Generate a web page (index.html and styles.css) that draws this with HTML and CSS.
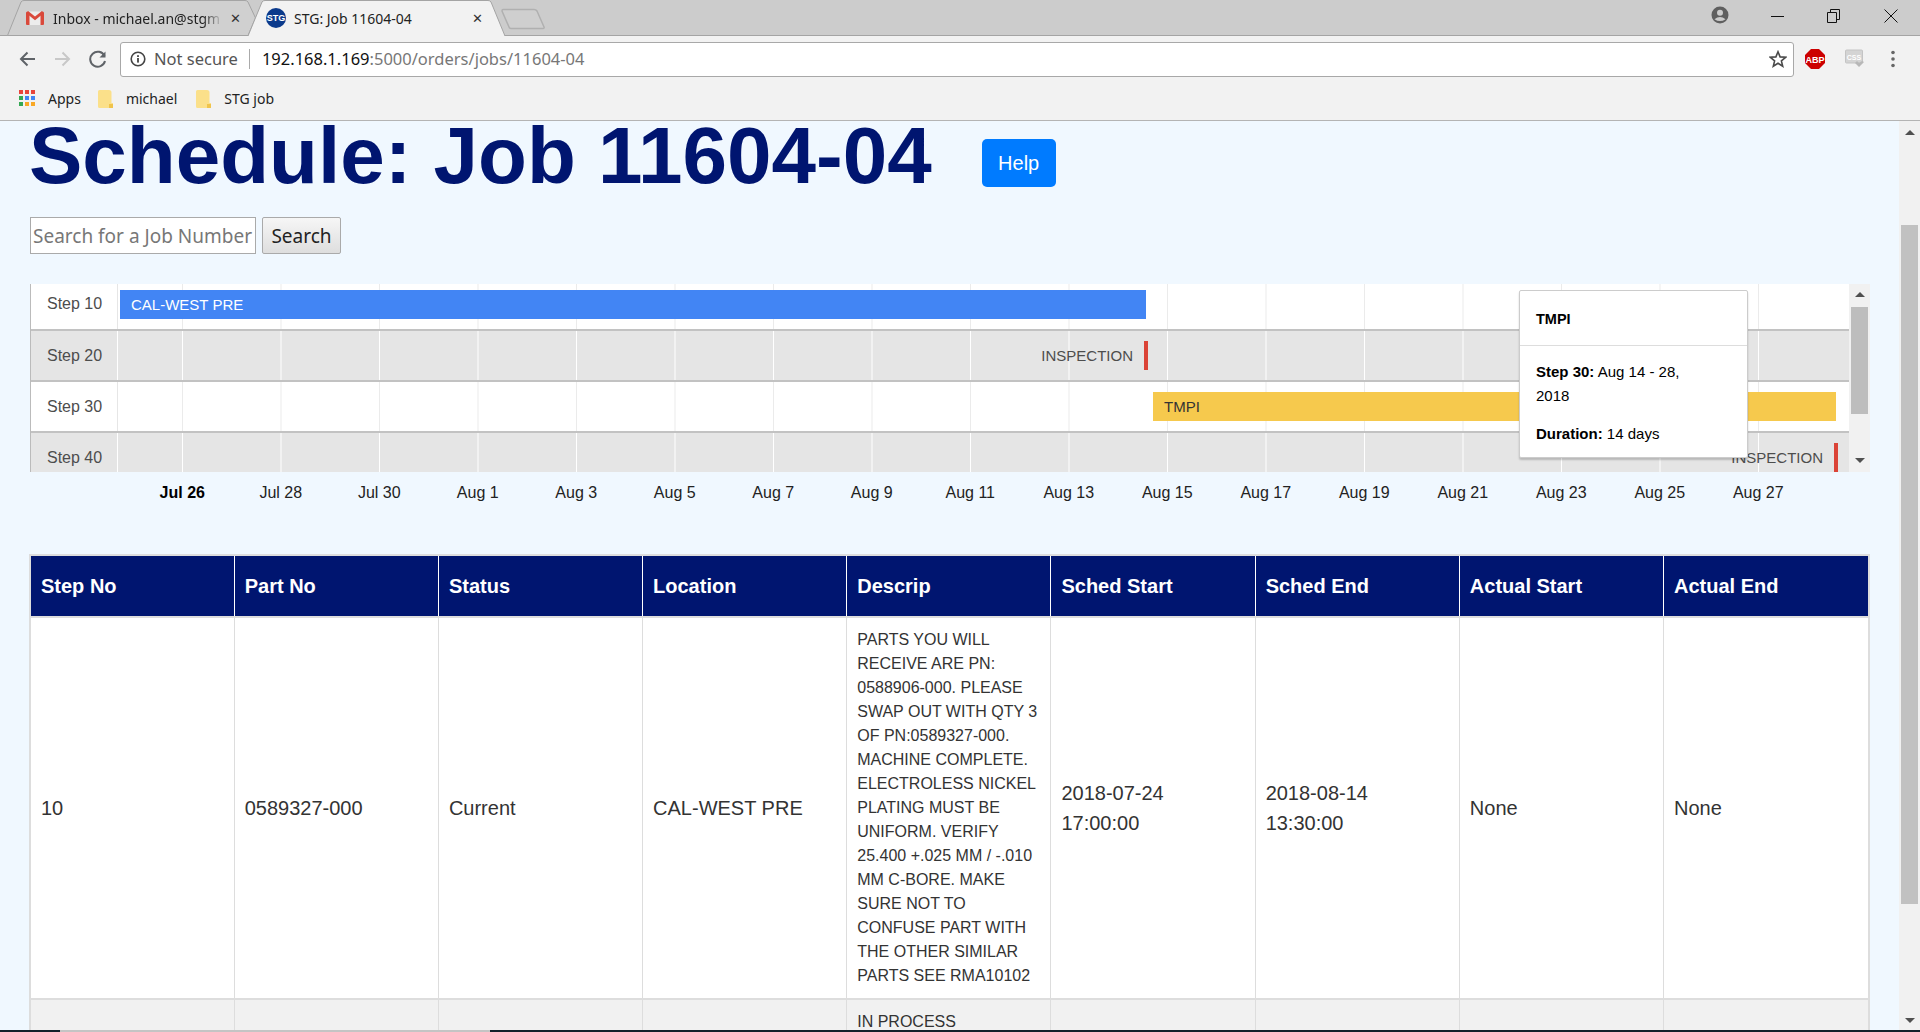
FILE: index.html
```html
<!DOCTYPE html>
<html lang="en">
<head>
    <meta charset="UTF-8">
    <title>STG: Job 11604-04</title>
    <link rel="stylesheet" href="styles.css">
</head>
<body>

    <!-- browser window top -->
    <header class="browser">
        <div class="tabstrip">
            <div class="tab tab-back">
                <svg class="tab-shape" viewBox="0 0 249 36" preserveAspectRatio="none"><path d="M0.5 35.5 L14 2 Q15 0.5 17 0.5 L238 0.5 Q240 0.5 241 2 L248.5 18 L241 35.5 Z"/></svg>
                <svg class="favicon" width="18" height="14" viewBox="0 0 18 14"><rect x="2" y="0.5" width="14" height="13.5" fill="#ececec"/><path d="M0 2 Q0 0.5 1.5 0.5 L3.5 2 V14 H1 Q0 14 0 13 Z M18 2 Q18 0.5 16.5 0.5 L14.5 2 V14 H17 Q18 14 18 13 Z" fill="#d9493b"/><path d="M1.2 1.2 L9 7.4 L16.8 1.2" fill="none" stroke="#d9493b" stroke-width="2.8"/></svg>
                <span class="tab-title tab-title-fade">Inbox - michael.an@stgm</span>
                <span class="tab-close">✕</span>
            </div>
            <div class="tab tab-active">
                <svg class="tab-shape" viewBox="0 0 257 36" preserveAspectRatio="none"><path d="M0 36 L14 2 Q15 0.5 17 0.5 L240 0.5 Q242 0.5 243 2 L257 36" /></svg>
                <svg class="favicon" width="20" height="20" viewBox="0 0 20 20"><circle cx="10" cy="10" r="10" fill="#0b3a8c"/><text x="10" y="13" text-anchor="middle" class="favicon-text">STG</text></svg>
                <span class="tab-title">STG: Job 11604-04</span>
                <span class="tab-close">✕</span>
            </div>
            <svg class="new-tab" width="44" height="22" viewBox="0 0 44 22"><path d="M2 1.5 L33 1.5 Q35 1.5 36 3 L43 19 Q43.5 20.5 42 20.5 L10 20.5 Q8.5 20.5 8 19 L1 3 Q1 1.5 2 1.5 Z" fill="#cfcfcf" stroke="#b0b0b0" stroke-width="1.5"/></svg>

            <div class="window-controls">
                <svg class="profile" width="18" height="18" viewBox="0 0 18 18"><circle cx="9" cy="9" r="8.5" fill="#5f5f5f"/><circle cx="9" cy="6.8" r="3" fill="#ccc"/><path d="M3.5 13.2 Q9 8.6 14.5 13.2 Q9 17 3.5 13.2 Z" fill="#ccc"/></svg>
                <svg class="win-btn win-min" width="14" height="14" viewBox="0 0 14 14"><path d="M0 7.5 H13" stroke="#111" fill="none"/></svg>
                <svg class="win-btn win-max" width="14" height="14" viewBox="0 0 14 14"><path d="M0.5 3.5 H9.5 V13.5 H0.5 Z M3.5 3.5 V0.5 H12.5 V10.5 H9.5" stroke="#111" fill="none"/></svg>
                <svg class="win-btn win-close" width="14" height="14" viewBox="0 0 14 14"><path d="M0.5 0.5 L13.5 13.5 M13.5 0.5 L0.5 13.5" stroke="#111" fill="none"/></svg>
            </div>
        </div>

        <div class="toolbar">
            <svg class="nav-btn" width="35" height="18" viewBox="0 0 35 18"><path d="M25 9 H11 M17.5 2.5 L11 9 L17.5 15.5" stroke="#5f6368" stroke-width="2" fill="none"/></svg>
            <svg class="nav-btn" width="35" height="18" viewBox="0 0 35 18"><path d="M10 9 H24 M17.5 2.5 L24 9 L17.5 15.5" stroke="#c8c8c8" stroke-width="2" fill="none"/></svg>
            <svg class="nav-btn" width="35" height="18" viewBox="0 0 35 18"><path d="M24.5 6 A7.5 7.5 0 1 0 25 11" stroke="#5f6368" stroke-width="2" fill="none"/><path d="M25.5 1.5 V7.5 H19.5 Z" fill="#5f6368"/></svg>

            <div class="omnibox">
                <svg class="info-icon" width="16" height="16" viewBox="0 0 16 16"><circle cx="8" cy="8" r="6.8" stroke="#444" stroke-width="1.6" fill="none"/><rect x="7.1" y="7" width="1.8" height="4.6" fill="#444"/><rect x="7.1" y="4.2" width="1.8" height="1.8" fill="#444"/></svg>
                <span class="not-secure">Not secure</span>
                <span class="omni-sep"></span>
                <span class="url">192.168.1.169<span class="url-path">:5000/orders/jobs/11604-04</span></span>
                <svg class="star" width="18" height="18" viewBox="0 0 18 18"><path d="M9 1.8 L11.1 6.9 L16.6 7.3 L12.4 10.9 L13.7 16.2 L9 13.3 L4.3 16.2 L5.6 10.9 L1.4 7.3 L6.9 6.9 Z" stroke="#4a4a4a" stroke-width="1.6" fill="none"/></svg>
            </div>

            <div class="extensions">
                <svg width="20" height="20" viewBox="0 0 20 20"><path d="M6 0 H14 L20 6 V14 L14 20 H6 L0 14 V6 Z" fill="#cc0000"/><text x="10" y="13.5" text-anchor="middle" class="abp-text">ABP</text></svg>
                <svg width="20" height="20" viewBox="0 0 20 20"><rect x="0.5" y="1" width="17" height="13" rx="1" fill="#d4d4d4" stroke="#c4c4c4"/><text x="9" y="10.5" text-anchor="middle" class="css-text">CSS</text><path d="M10 14 L14 18 L19 13 L17 12 L14 14 L12 12 Z" fill="#b8b8b8"/></svg>
                <svg class="menu-dots" width="6" height="18" viewBox="0 0 6 18"><circle cx="3" cy="2.5" r="1.8" fill="#666"/><circle cx="3" cy="9" r="1.8" fill="#666"/><circle cx="3" cy="15.5" r="1.8" fill="#666"/></svg>
            </div>
        </div>

        <div class="bookmarks">
            <svg class="apps-icon" width="17" height="17" viewBox="0 0 17 17">
                <rect x="0" y="0" width="4" height="4" fill="#e8453c"/><rect x="6" y="0" width="4" height="4" fill="#e8453c"/><rect x="12" y="0" width="4" height="4" fill="#e8453c"/>
                <rect x="0" y="6" width="4" height="4" fill="#34a853"/><rect x="6" y="6" width="4" height="4" fill="#4285f4"/><rect x="12" y="6" width="4" height="4" fill="#4285f4"/>
                <rect x="0" y="12" width="4" height="4" fill="#34a853"/><rect x="6" y="12" width="4" height="4" fill="#f9a825"/><rect x="12" y="12" width="4" height="4" fill="#f9a825"/>
            </svg>
            <span class="bm-label bm-apps">Apps</span>
            <svg class="folder" width="15" height="18" viewBox="0 0 15 18"><path d="M1.5 0 H11 Q13.5 0 13.5 2.5 V13 H15 V18 H1.5 Q0 18 0 16.5 V1.5 Q0 0 1.5 0 Z" fill="#fbe08a"/><path d="M11 14 H15 V18 H11 Z" fill="#f0c44c"/></svg>
            <span class="bm-label bm-michael">michael</span>
            <svg class="folder" width="15" height="18" viewBox="0 0 15 18"><path d="M1.5 0 H11 Q13.5 0 13.5 2.5 V13 H15 V18 H1.5 Q0 18 0 16.5 V1.5 Q0 0 1.5 0 Z" fill="#fbe08a"/><path d="M11 14 H15 V18 H11 Z" fill="#f0c44c"/></svg>
            <span class="bm-label">STG job</span>
        </div>
    </header>

    <div class="viewport">
        <main class="page">
            <div class="title-row">
                <h1>Schedule: Job 11604-04</h1>
                <button type="button" class="help-btn">Help</button>
            </div>

            <form class="search-form">
                <input type="text" placeholder="Search for a Job Number">
                <button type="button">Search</button>
            </form>

            <div class="timeline">
                <div class="timeline-rows">
                    <div class="t-row t-row-first">
                        <div class="t-label">Step 10</div>
                        <div class="t-track">
                            <div class="bar bar-blue" style="left: 2px; width: 1026px;">CAL-WEST PRE</div>
                        </div>
                    </div>
                    <div class="t-row t-row-grey">
                        <div class="t-label">Step 20</div>
                        <div class="t-track">
                            <div class="bar bar-red" style="left: 1026px; width: 4px;"><span class="bar-outside">INSPECTION</span></div>
                        </div>
                    </div>
                    <div class="t-row">
                        <div class="t-label">Step 30</div>
                        <div class="t-track">
                            <div class="bar bar-yellow" style="left: 1035px; width: 683px;">TMPI</div>
                        </div>
                    </div>
                    <div class="t-row t-row-grey">
                        <div class="t-label">Step 40</div>
                        <div class="t-track">
                            <div class="bar bar-red" style="left: 1716px; width: 4px;"><span class="bar-outside">INSPECTION</span></div>
                        </div>
                    </div>
                </div>

                <div class="mini-scroll">
                    <span class="arrow-up"></span>
                    <div class="mini-thumb"></div>
                    <span class="arrow-down"></span>
                </div>

                <div class="chart-tip">
                    <div class="tip-head">TMPI</div>
                    <div class="tip-body">
                        <p><b>Step 30:</b> Aug 14 - 28,<br>2018</p>
                        <p class="tip-last"><b>Duration:</b> 14 days</p>
                    </div>
                </div>
            </div>

            <div class="axis">
                <span class="axis-now">Jul 26</span>
                <span>Jul 28</span>
                <span>Jul 30</span>
                <span>Aug 1</span>
                <span>Aug 3</span>
                <span>Aug 5</span>
                <span>Aug 7</span>
                <span>Aug 9</span>
                <span>Aug 11</span>
                <span>Aug 13</span>
                <span>Aug 15</span>
                <span>Aug 17</span>
                <span>Aug 19</span>
                <span>Aug 21</span>
                <span>Aug 23</span>
                <span>Aug 25</span>
                <span>Aug 27</span>
            </div>

            <div class="table-wrap">
                <table class="steps">
                    <thead>
                        <tr>
                            <th>Step No</th>
                            <th>Part No</th>
                            <th>Status</th>
                            <th>Location</th>
                            <th>Descrip</th>
                            <th>Sched Start</th>
                            <th>Sched End</th>
                            <th>Actual Start</th>
                            <th>Actual End</th>
                        </tr>
                    </thead>
                    <tbody>
                        <tr>
                            <td>10</td>
                            <td>0589327-000</td>
                            <td>Current</td>
                            <td>CAL-WEST PRE</td>
                            <td class="descrip">PARTS YOU WILL RECEIVE ARE PN: 0588906-000. PLEASE SWAP OUT WITH QTY 3 OF PN:0589327-000. MACHINE COMPLETE. ELECTROLESS NICKEL PLATING MUST BE UNIFORM. VERIFY 25.400 +.025 MM / -.010 MM C-BORE. MAKE SURE NOT TO CONFUSE PART WITH THE OTHER SIMILAR PARTS SEE RMA10102</td>
                            <td>2018-07-24 17:00:00</td>
                            <td>2018-08-14 13:30:00</td>
                            <td>None</td>
                            <td>None</td>
                        </tr>
                        <tr class="row-alt">
                            <td></td>
                            <td></td>
                            <td></td>
                            <td></td>
                            <td class="descrip">IN PROCESS</td>
                            <td></td>
                            <td></td>
                            <td></td>
                            <td></td>
                        </tr>
                    </tbody>
                </table>
            </div>
        </main>

        <div class="page-scroll">
            <span class="arrow-up"></span>
            <div class="page-thumb"></div>
            <span class="arrow-down"></span>
        </div>
    </div>

    <div class="taskbar"><div class="taskbar-mid"></div></div>

</body>
</html>
```

FILE: styles.css
```css
html, body {
    height: 100%;
}

body {
    margin: 0;
    height: 100vh;
    display: flex;
    flex-direction: column;
    overflow: hidden;
    font-family: "Liberation Sans", Arial, sans-serif;
    background-color: #f0f8ff;
}

/* browser top */
.browser {
    position: relative;
    z-index: 2;
    flex: none;
    height: 121px;
    box-sizing: border-box;
    background-color: #f2f2f2;
    border-bottom: 1px solid #b4b4b4;
    font-family: "Noto Sans", "Open Sans", sans-serif;
    color: #222;
}

.tabstrip {
    height: 36px;
    box-sizing: border-box;
    display: flex;
    background-color: #cccccc;
    border-bottom: 1px solid #a4a4a4;
    padding-left: 7px;
}

.tab {
    position: relative;
    height: 36px;
    display: flex;
    align-items: center;
    font-size: 14px;
}

.tab-back {
    width: 249px;
}

.tab-active {
    width: 257px;
    margin-left: -8px;
}

.tab-shape {
    position: absolute;
    left: 0;
    top: 0;
    width: 100%;
    height: 100%;
}

.tab-back .tab-shape path {
    fill: #d0d0d0;
    stroke: #a4a4a4;
}

.tab-active .tab-shape path {
    fill: #f2f2f2;
    stroke: #a4a4a4;
}

.favicon {
    position: relative;
    flex: none;
}

.tab-back .favicon {
    margin-left: 19px;
}

.tab-active .favicon {
    margin-left: 18px;
}

.favicon-text {
    font-family: "Liberation Sans", sans-serif;
    font-size: 9px;
    font-weight: bold;
    fill: #fff;
}

.tab-title {
    position: relative;
    white-space: nowrap;
    color: #222;
}

.tab-back .tab-title {
    margin-left: 9px;
    width: 170px;
}

.tab-active .tab-title {
    margin-left: 8px;
    width: 171px;
}

.tab-title-fade {
    -webkit-mask-image: linear-gradient(to right, #000 88%, transparent 100%);
    mask-image: linear-gradient(to right, #000 88%, transparent 100%);
}

.tab-close {
    position: relative;
    margin-left: 7px;
    font-size: 13px;
    font-weight: bold;
    font-family: "DejaVu Sans", sans-serif;
    color: #333;
}

.new-tab {
    margin: 8px 0 0 -4px;
    flex: none;
}

.window-controls {
    margin-left: auto;
    display: flex;
    align-items: flex-start;
}

.profile {
    margin: 6px 42px 0 0;
}

.win-btn {
    margin-top: 9px;
}

.win-min {
    margin-right: 42px;
}

.win-max {
    margin-right: 43px;
    margin-top: 9px;
}

.win-close {
    margin-right: 22px;
}

.toolbar {
    height: 46px;
    display: flex;
    align-items: center;
    padding-left: 10px;
}

.nav-btn {
    flex: none;
}

.omnibox {
    flex: 1;
    height: 35px;
    box-sizing: border-box;
    margin-left: 5px;
    display: flex;
    align-items: center;
    background-color: #fff;
    border: 1px solid #a8a8a8;
    border-radius: 3px;
    padding: 0 6px 0 9px;
}

.not-secure {
    margin: 0 0 2px 8px;
    font-size: 16.5px;
    color: #555;
}

.omni-sep {
    width: 1px;
    height: 20px;
    margin: 0 12px 0 11px;
    background-color: #aaa;
}

.url {
    margin-bottom: 2px;
    font-size: 16.5px;
    color: #111;
}

.url-path {
    color: #777;
}

.star {
    margin-left: auto;
}

.extensions {
    flex: none;
    width: 126px;
    display: flex;
    align-items: center;
    padding-left: 11px;
    box-sizing: border-box;
    gap: 20px;
}

.menu-dots {
    margin-left: 5px;
}

.abp-text {
    font-family: "Liberation Sans", sans-serif;
    font-size: 9px;
    font-weight: bold;
    fill: #fff;
}

.css-text {
    font-family: "Liberation Sans", sans-serif;
    font-size: 7px;
    font-weight: bold;
    fill: #fff;
}

.bookmarks {
    height: 33px;
    display: flex;
    align-items: center;
    padding-left: 19px;
    font-size: 14px;
}

.bm-label {
    white-space: nowrap;
}

.bm-apps {
    margin: 0 17px 0 12px;
}

.bm-michael {
    margin-right: 19px;
}

.folder + .bm-label {
    margin-left: 13px;
}

/* page */
.viewport {
    flex: 1;
    display: flex;
    min-height: 0;
}

.page {
    flex: 1;
    min-width: 0;
    display: flex;
    flex-direction: column;
    padding-left: 29px;
    background-color: #f0f8ff;
}

.page-scroll {
    flex: none;
    width: 21px;
    display: flex;
    flex-direction: column;
    align-items: center;
    background-color: #f1f1f1;
    position: relative;
}

.page-thumb {
    width: 17px;
    height: 679px;
    margin-top: 90px;
    background-color: #c1c1c1;
}

.arrow-up,
.arrow-down {
    width: 0;
    height: 0;
    border-left: 5px solid transparent;
    border-right: 5px solid transparent;
}

.arrow-up {
    border-bottom: 5px solid #505050;
    margin-top: 9px;
}

.arrow-down {
    border-top: 5px solid #505050;
    margin-top: auto;
    margin-bottom: 7px;
}

.title-row {
    flex: none;
    display: flex;
    align-items: flex-start;
    height: 70px;
}

h1 {
    margin: 0;
    font-size: 80px;
    line-height: 70px;
    font-weight: bold;
    color: #001570;
    white-space: nowrap;
}

.help-btn {
    margin: 18px 0 0 50px;
    height: 48px;
    width: 74px;
    padding: 0;
    border: none;
    border-radius: 5px;
    background-color: #007bff;
    color: #fff;
    font-family: "Liberation Sans", sans-serif;
    font-size: 20px;
}

.search-form {
    flex: none;
    display: flex;
    margin: 26px 0 0 1px;
    font-family: "Noto Sans", "Open Sans", sans-serif;
}

.search-form input {
    width: 226px;
    height: 37px;
    box-sizing: border-box;
    padding: 0 2px;
    border: 1px solid #aaa;
    font-family: inherit;
    font-size: 19px;
}

.search-form input::placeholder {
    color: #777;
}

.search-form button {
    width: 79px;
    height: 37px;
    margin-left: 6px;
    padding: 0;
    border: 1px solid #aaa;
    border-radius: 2px;
    background: linear-gradient(#f6f6f6, #dedede);
    font-family: inherit;
    font-size: 19px;
    color: #222;
}

/* timeline chart */
.timeline {
    flex: none;
    position: relative;
    display: flex;
    width: 1840px;
    height: 188px;
    margin: 30px 0 0 1px;
    overflow: hidden;
}

.timeline-rows {
    flex: none;
    width: 1819px;
    border-left: 1px solid #bbb;
    box-sizing: border-box;
}

.t-row {
    position: relative;
    display: flex;
    height: 51px;
    box-sizing: border-box;
    background-color: #fff;
    border-bottom: 2px solid #c2c2c2;
}

.t-row-first {
    height: 47px;
}

.t-row-grey {
    background-color: #e5e5e5;
}

.t-label {
    flex: none;
    width: 87px;
    box-sizing: border-box;
    padding-left: 16px;
    font-size: 16px;
    line-height: 50px;
    color: #4d4d4d;
    border-right: 1px solid #e6e6e6;
}

.t-row-first .t-label {
    line-height: 40px;
}

.t-row-grey .t-label {
    border-right-color: #fff;
}

.t-track {
    position: relative;
    flex: 1;
    background-image: linear-gradient(to right, #ebebeb 1px, transparent 1px);
    background-size: 98.5px 100%;
    background-position: 64px 0;
}

.t-row-grey .t-track {
    background-image: linear-gradient(to right, #fff 1px, transparent 1px);
}

.bar {
    position: absolute;
    top: 10px;
    height: 29px;
    box-sizing: border-box;
    padding-left: 11px;
    font-size: 15px;
    line-height: 29px;
    white-space: nowrap;
}

.t-row-first .bar {
    top: 6px;
}

.bar-blue {
    background-color: #4285f4;
    color: #fff;
}

.bar-yellow {
    background-color: #f6c94d;
    color: #333;
}

.bar-red {
    background-color: #db4437;
    padding: 0;
}

.bar-outside {
    position: absolute;
    right: 100%;
    margin-right: 11px;
    color: #4d4d4d;
}

.mini-scroll {
    flex: none;
    width: 21px;
    display: flex;
    flex-direction: column;
    align-items: center;
    background-color: #f1f1f1;
}

.mini-scroll .arrow-up {
    margin-top: 8px;
}

.mini-scroll .arrow-down {
    margin-bottom: 9px;
}

.mini-thumb {
    width: 17px;
    height: 107px;
    margin-top: 10px;
    background-color: #bdbdbd;
}

.chart-tip {
    position: absolute;
    left: 1489px;
    top: 6px;
    width: 229px;
    height: 168px;
    box-sizing: border-box;
    background-color: #fff;
    border: 1px solid #ccc;
    border-radius: 2px;
    box-shadow: 0 2px 2px rgba(0, 0, 0, 0.2);
    font-size: 15px;
    color: #000;
}

.tip-head {
    height: 55px;
    box-sizing: border-box;
    padding-left: 16px;
    font-size: 14.5px;
    line-height: 57px;
    font-weight: bold;
    border-bottom: 1px solid #ddd;
}

.tip-body {
    padding: 14px 16px 0;
}

.tip-body p {
    margin: 0;
    line-height: 24px;
}

.tip-body .tip-last {
    margin-top: 14px;
}

.axis {
    flex: none;
    display: flex;
    height: 40px;
    padding-left: 104px;
    font-size: 16px;
    line-height: 42px;
    color: #222;
}

.axis span {
    flex: none;
    width: 98.5px;
    text-align: center;
    white-space: nowrap;
}

.axis .axis-now {
    font-weight: bold;
    color: #000;
}

/* job steps table */
.table-wrap {
    flex: 1;
    min-height: 0;
    overflow: hidden;
    margin-top: 42px;
}

.steps {
    width: 1841px;
    table-layout: fixed;
    border-collapse: collapse;
    border: 2px solid #ddd;
    font-size: 20px;
    line-height: 30px;
    color: #333;
}

.steps th {
    width: 204.2px;
    padding: 15px 10px;
    box-sizing: border-box;
    text-align: left;
    background-color: #001570;
    color: #fff;
    border-left: 1px solid #fff;
    border-bottom: 2px solid #ddd;
}

.steps th:last-child {
    width: auto;
}

.steps td {
    padding: 10px;
    background-color: #fff;
    border-left: 1px solid #ddd;
    border-bottom: 2px solid #ddd;
}

.steps .descrip {
    font-size: 16px;
    line-height: 24px;
}

.steps .row-alt td {
    height: 200px;
    vertical-align: top;
    background-color: #f1f1f1;
}

/* desktop taskbar peeking in at the bottom */
.taskbar {
    position: relative;
    z-index: 2;
    flex: none;
    height: 2px;
    background-color: #13212b;
}

.taskbar-mid {
    width: 430px;
    height: 2px;
    margin-left: 60px;
    background-color: #c4c4c4;
}
```
